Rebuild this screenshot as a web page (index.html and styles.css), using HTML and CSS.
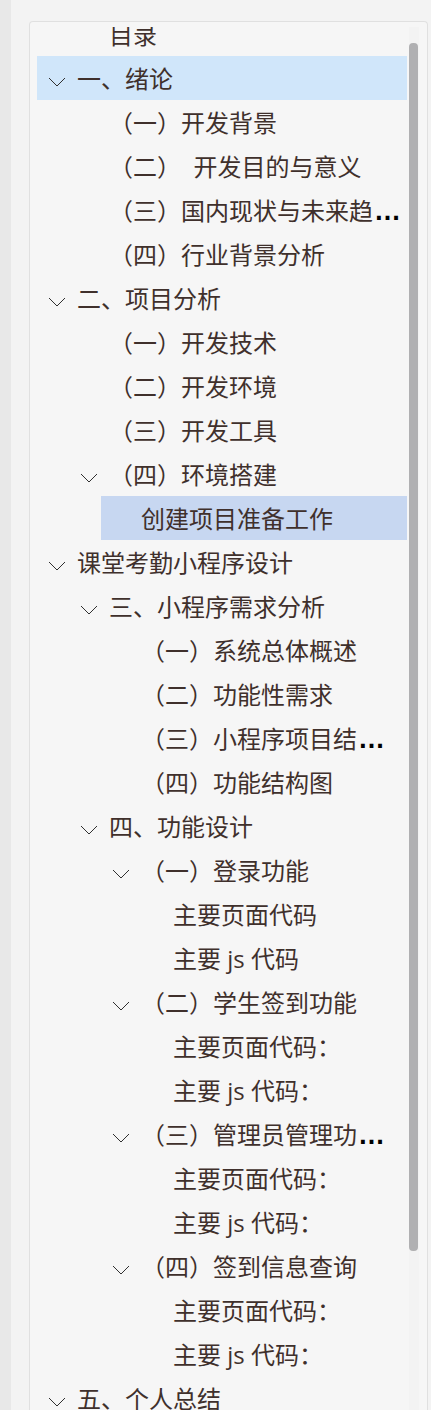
FILE: index.html
```html
<!DOCTYPE html>
<html lang="zh-CN">
<head>
<meta charset="utf-8">
<meta name="viewport" content="width=device-width, initial-scale=1">
<title>目录</title>
<link rel="stylesheet" href="styles.css">
</head>
<body>
<svg class="symbols" aria-hidden="true">
  <symbol id="chevron" viewBox="0 0 18 10"><path d="M1 1 L9 9 L17 1"/></symbol>
</svg>
<nav class="panel" aria-label="目录">
  <div class="viewport">
    <ul class="tree">
      <li>
        <ul>
          <li><div class="row"><a href="#toc">目录</a></div></li>
        </ul>
      </li>
      <li>
        <div class="row row-hover"><button class="toggle" aria-label="折叠"><svg><use href="#chevron"/></svg></button><a href="#s1">一、绪论</a></div>
        <ul>
          <li><div class="row"><a href="#s1-1">（一）开发背景</a></div></li>
          <li><div class="row"><a href="#s1-2">（二）  开发目的与意义</a></div></li>
          <li><div class="row"><a href="#s1-3">（三）国内现状与未来趋<span class="more">…</span></a></div></li>
          <li><div class="row"><a href="#s1-4">（四）行业背景分析</a></div></li>
        </ul>
      </li>
      <li>
        <div class="row"><button class="toggle" aria-label="折叠"><svg><use href="#chevron"/></svg></button><a href="#s2">二、项目分析</a></div>
        <ul>
          <li><div class="row"><a href="#s2-1">（一）开发技术</a></div></li>
          <li><div class="row"><a href="#s2-2">（二）开发环境</a></div></li>
          <li><div class="row"><a href="#s2-3">（三）开发工具</a></div></li>
          <li>
            <div class="row"><button class="toggle" aria-label="折叠"><svg><use href="#chevron"/></svg></button><a href="#s2-4">（四）环境搭建</a></div>
            <ul>
              <li><div class="row row-selected"><a href="#s2-4-1" aria-current="true">创建项目准备工作</a></div></li>
            </ul>
          </li>
        </ul>
      </li>
      <li>
        <div class="row"><button class="toggle" aria-label="折叠"><svg><use href="#chevron"/></svg></button><a href="#design">课堂考勤小程序设计</a></div>
        <ul>
          <li>
            <div class="row"><button class="toggle" aria-label="折叠"><svg><use href="#chevron"/></svg></button><a href="#s3">三、小程序需求分析</a></div>
            <ul>
              <li><div class="row"><a href="#s3-1">（一）系统总体概述</a></div></li>
              <li><div class="row"><a href="#s3-2">（二）功能性需求</a></div></li>
              <li><div class="row"><a href="#s3-3">（三）小程序项目结<span class="more">…</span></a></div></li>
              <li><div class="row"><a href="#s3-4">（四）功能结构图</a></div></li>
            </ul>
          </li>
          <li>
            <div class="row"><button class="toggle" aria-label="折叠"><svg><use href="#chevron"/></svg></button><a href="#s4">四、功能设计</a></div>
            <ul>
              <li>
                <div class="row"><button class="toggle" aria-label="折叠"><svg><use href="#chevron"/></svg></button><a href="#s4-1">（一）登录功能</a></div>
                <ul>
                  <li><div class="row"><a href="#s4-1-1">主要页面代码</a></div></li>
                  <li><div class="row"><a href="#s4-1-2">主要 js 代码</a></div></li>
                </ul>
              </li>
              <li>
                <div class="row"><button class="toggle" aria-label="折叠"><svg><use href="#chevron"/></svg></button><a href="#s4-2">（二）学生签到功能</a></div>
                <ul>
                  <li><div class="row"><a href="#s4-2-1">主要页面代码：</a></div></li>
                  <li><div class="row"><a href="#s4-2-2">主要 js 代码：</a></div></li>
                </ul>
              </li>
              <li>
                <div class="row"><button class="toggle" aria-label="折叠"><svg><use href="#chevron"/></svg></button><a href="#s4-3">（三）管理员管理功<span class="more">…</span></a></div>
                <ul>
                  <li><div class="row"><a href="#s4-3-1">主要页面代码：</a></div></li>
                  <li><div class="row"><a href="#s4-3-2">主要 js 代码：</a></div></li>
                </ul>
              </li>
              <li>
                <div class="row"><button class="toggle" aria-label="折叠"><svg><use href="#chevron"/></svg></button><a href="#s4-4">（四）签到信息查询</a></div>
                <ul>
                  <li><div class="row"><a href="#s4-4-1">主要页面代码：</a></div></li>
                  <li><div class="row"><a href="#s4-4-2">主要 js 代码：</a></div></li>
                </ul>
              </li>
            </ul>
          </li>
        </ul>
      </li>
      <li>
        <div class="row"><button class="toggle" aria-label="折叠"><svg><use href="#chevron"/></svg></button><a href="#s5">五、个人总结</a></div>
      </li>
    </ul>
  </div>
  <div class="track"><div class="thumb"></div></div>
</nav>
</body>
</html>
```

FILE: styles.css
```css
* {
  box-sizing: border-box;
}

body {
  margin: 0;
  height: 100vh;
  overflow: hidden;
  display: flex;
  padding: 21px 3px 0 18px;
  border-left: 11px solid #e8e8e8;
  background: #f3f3f3;
  color: #3f302c;
  font: 24px/44px "Open Sans", "Noto Sans CJK SC", sans-serif;
}

.symbols {
  position: absolute;
  width: 0;
  height: 0;
}

.panel {
  flex: 1;
  min-width: 0;
  display: flex;
  gap: 2px;
  padding: 5px 8px 0 7px;
  border: 1px solid #e0e0e0;
  border-bottom: 0;
  border-radius: 4px 4px 0 0;
  background: #f6f6f6;
}

.viewport {
  flex: 1;
  min-width: 0;
  overflow: hidden;
}

/* The list is scrolled a little past its first row. */
.tree {
  margin-top: -15px;
}

ul {
  margin: 0;
  padding: 0;
  list-style: none;
}

ul ul {
  padding-left: 32px;
}

.row {
  display: flex;
  align-items: center;
  height: 44px;
  padding-top: 2px;
  padding-left: 40px;
  white-space: pre;
}

.row-hover {
  background: #d0e6fa;
}

.row-selected {
  background: #c7d7f1;
}

.row a {
  color: inherit;
  text-decoration: none;
}

.toggle {
  display: flex;
  align-items: center;
  justify-content: center;
  width: 40px;
  height: 44px;
  margin-left: -40px;
  padding: 6px 0 0;
  border: 0;
  background: none;
}

.toggle svg {
  width: 18px;
  height: 10px;
  fill: none;
  stroke: #303030;
  stroke-width: 1;
}

.row .more {
  margin-left: 1px;
  color: #000;
  font-family: "Liberation Sans", sans-serif;
  font-size: 27px;
  font-weight: bold;
  line-height: 1;
}

.track {
  width: 10px;
  padding-top: 16px;
  background: #f3f3f3;
}

.thumb {
  width: 9px;
  height: calc(100% - 159px);
  border-radius: 4px;
  background: #b0b0b2;
}
```
